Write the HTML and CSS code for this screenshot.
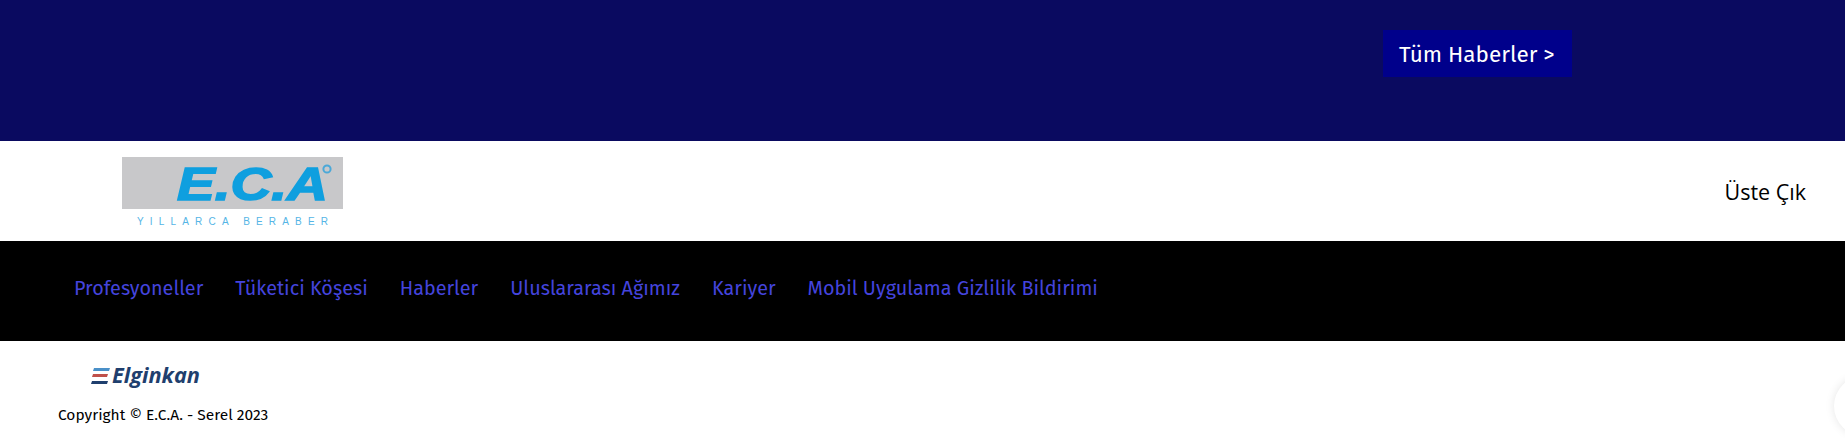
FILE: index.html
```html
<!DOCTYPE html>
<html lang="tr">
<head>
    <meta charset="UTF-8">
    <meta name="viewport" content="width=device-width, initial-scale=1.0">
    <title>E.C.A.</title>
    <link rel="stylesheet" href="styles.css">
</head>
<body>

    <!-- haberler bandi -->
    <section class="news-band">
        <a href="#" class="news-btn">Tüm Haberler &gt;</a>
    </section>

    <!-- logo ve yukari cik -->
    <header class="top-bar">
        <a href="#" class="eca-logo">
            <svg width="221" height="72" viewBox="0 0 221 72">
                <rect x="0" y="0" width="221" height="52" fill="#c8c8ca"/>
                <text x="55" y="43" class="eca-word" textLength="151" lengthAdjust="spacingAndGlyphs">E.C.A</text>
                <circle cx="205" cy="12" r="3.6" fill="#c8c8ca" stroke="#4aa8d8" stroke-width="2"/>
                <text x="15" y="68" class="eca-tag" textLength="191">YILLARCA BERABER</text>
            </svg>
        </a>
        <a href="#" class="to-top">Üste Çık</a>
    </header>

    <!-- ana menu -->
    <nav class="main-nav">
        <a href="#">Profesyoneller</a>
        <a href="#">Tüketici Köşesi</a>
        <a href="#">Haberler</a>
        <a href="#">Uluslararası Ağımız</a>
        <a href="#">Kariyer</a>
        <a href="#">Mobil Uygulama Gizlilik Bildirimi</a>
    </nav>

    <!-- alt bilgi -->
    <footer class="site-footer">
        <a href="#" class="elginkan-logo">
            <svg width="130" height="32" viewBox="0 0 130 32">
                <polygon points="3,9 19,9 18,12 2,12" fill="#4a90c8"/>
                <polygon points="2,15 17,15 16,18 1,18" fill="#c0504a"/>
                <polygon points="1,22 17,22 16,25 0,25" fill="#1f3f6e"/>
                <text x="21" y="24" class="elginkan-word" textLength="88" lengthAdjust="spacingAndGlyphs">Elginkan</text>
            </svg>
        </a>
        <p class="copyright">Copyright © E.C.A. - Serel 2023</p>
    </footer>

    <div class="float-badge"></div>

</body>
</html>
```

FILE: styles.css
```css
/* genel */
html, body {
    height: 100%;
}

body {
    margin: 0;
    overflow: hidden;
    position: relative;
    background-color: #fff;
    font-family: "Fira Sans", "Lato", "Noto Sans", sans-serif;
}

a {
    text-decoration: none;
}

/* haberler bandi */
.news-band {
    height: 141px;
    box-sizing: border-box;
    padding: 30px 273px 0 0;
    background-color: #0a0a60;
    display: flex;
    justify-content: flex-end;
    align-items: flex-start;
}

.news-btn {
    width: 189px;
    height: 47px;
    box-sizing: border-box;
    padding-left: 16px;
    line-height: 49px;
    background-color: #00008b;
    color: #fff;
    font-size: 22.5px;
}

/* logo satiri */
.top-bar {
    height: 100px;
    box-sizing: border-box;
    padding: 16px 39px 0 122px;
    display: flex;
    justify-content: space-between;
    align-items: flex-start;
}

.eca-logo {
    display: block;
    height: 72px;
}

.eca-word {
    font-family: "Liberation Sans", sans-serif;
    font-weight: bold;
    font-style: italic;
    font-size: 47px;
    fill: #0f9fdf;
    stroke: #0f9fdf;
    stroke-width: 1.6px;
}

.eca-tag {
    font-family: "Liberation Sans", sans-serif;
    font-size: 10px;
    fill: #55b5e6;
}

.to-top {
    margin-top: 20px;
    color: #000;
    font-family: "Open Sans", sans-serif;
    font-size: 21.5px;
    line-height: 30px;
}

/* menu */
.main-nav {
    height: 100px;
    box-sizing: border-box;
    padding: 0 0 6px 74px;
    background-color: #000;
    display: flex;
    align-items: center;
    gap: 32px;
}

.main-nav a {
    color: #4444dd;
    font-size: 19.8px;
}

/* alt bilgi */
.site-footer {
    padding: 18px 0 0 58px;
}

.elginkan-logo {
    display: block;
    margin-left: 33px;
    height: 32px;
}

.elginkan-word {
    font-family: "Open Sans", sans-serif;
    font-weight: bold;
    font-style: italic;
    font-size: 21px;
    fill: #1f3f6e;
}

.copyright {
    margin: 15px 0 0;
    color: #000;
    font-size: 15.5px;
}

/* sag alttaki yuvarlak */
.float-badge {
    position: absolute;
    left: 1834px;
    top: 376px;
    width: 60px;
    height: 60px;
    border-radius: 50%;
    background-color: #fff;
    box-shadow: 0 0 10px rgba(0, 0, 0, 0.1);
}
```
